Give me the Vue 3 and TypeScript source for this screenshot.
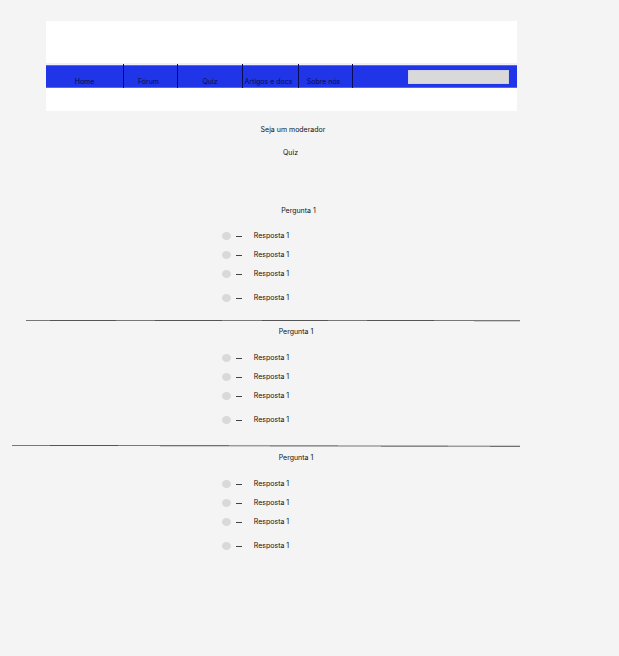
<script setup lang="ts">
import { ref } from 'vue'

interface NavItem {
  label: string
  href: string
  centered?: boolean
}

interface Segment {
  start: number
  end: number
  top: string
  bottom: string
}

interface Question {
  id: string
  title: string
  answers: string[]
}

const navItems: NavItem[] = [
  { label: 'Home', href: '#home', centered: true },
  { label: 'Fórum', href: '#forum' },
  { label: 'Quiz', href: '#quiz', centered: true },
  { label: 'Artigos e docs', href: '#artigos' },
  { label: 'Sobre nós', href: '#sobre' },
]

const answers = ['Resposta 1', 'Resposta 1', 'Resposta 1', 'Resposta 1']

const questions: Question[] = [
  { id: 'q1', title: 'Pergunta 1', answers },
  { id: 'q2', title: 'Pergunta 1', answers },
  { id: 'q3', title: 'Pergunta 1', answers },
]

const selected = ref<Record<string, number | undefined>>({})

// Hand-ruled dividers: tone of the upper and lower pixel row along each stretch.
const none = 'transparent'
const dividers: { width: number; segments: Segment[] }[] = [
  {
    width: 494,
    segments: [
      { start: 0, end: 24, top: '#777', bottom: none },
      { start: 24, end: 90, top: '#555', bottom: none },
      { start: 90, end: 129, top: '#777', bottom: none },
      { start: 129, end: 196, top: '#555', bottom: none },
      { start: 196, end: 236, top: '#777', bottom: none },
      { start: 236, end: 302, top: '#555', bottom: none },
      { start: 302, end: 341, top: '#777', bottom: none },
      { start: 341, end: 408, top: '#555', bottom: none },
      { start: 408, end: 448, top: '#777', bottom: none },
      { start: 448, end: 494, top: '#777', bottom: '#ccc' },
    ],
  },
  {
    width: 508,
    segments: [
      { start: 0, end: 38, top: '#777', bottom: none },
      { start: 38, end: 106, top: '#555', bottom: none },
      { start: 106, end: 148, top: '#777', bottom: none },
      { start: 148, end: 217, top: '#707070', bottom: '#ccc' },
      { start: 217, end: 258, top: '#999', bottom: '#ccc' },
      { start: 258, end: 326, top: '#909090', bottom: '#b4b4b4' },
      { start: 326, end: 369, top: '#b4b4b4', bottom: '#b4b4b4' },
      { start: 369, end: 436, top: '#b4b4b4', bottom: '#888' },
      { start: 436, end: 478, top: '#ccc', bottom: '#999' },
      { start: 478, end: 508, top: '#ccc', bottom: '#707070' },
    ],
  },
]
</script>

<template>
  <div class="page">
    <header class="header">
      <nav class="nav" aria-label="Principal">
        <a
          v-for="item in navItems"
          :key="item.label"
          class="nav-link"
          :class="{ centered: item.centered }"
          :href="item.href"
        >{{ item.label }}</a>
        <div class="search">
          <input class="search-input" type="search" aria-label="Buscar" />
        </div>
      </nav>
    </header>

    <main>
      <div class="intro">
        <a class="moderator" href="#moderador">Seja um moderador</a>
        <h1 class="title">Quiz</h1>
      </div>

      <template v-for="(question, index) in questions" :key="question.id">
        <svg
          v-if="index > 0"
          class="divider"
          :class="{ wide: index === 2 }"
          :viewBox="`0 0 ${dividers[index - 1].width} 2`"
          preserveAspectRatio="none"
          shape-rendering="crispEdges"
          aria-hidden="true"
        >
          <g v-for="segment in dividers[index - 1].segments" :key="segment.start">
            <rect :x="segment.start" y="0" :width="segment.end - segment.start" height="1" :fill="segment.top" />
            <rect :x="segment.start" y="1" :width="segment.end - segment.start" height="1" :fill="segment.bottom" />
          </g>
        </svg>
        <section class="question" role="radiogroup" :aria-labelledby="question.id">
          <h2 :id="question.id" class="question-title">{{ question.title }}</h2>
          <div class="answers">
            <label v-for="(answer, i) in question.answers" :key="i" class="answer">
              <input v-model="selected[question.id]" class="radio" type="radio" :name="question.id" :value="i" />
              <span class="dash"></span>
              <span>{{ answer }}</span>
            </label>
          </div>
        </section>
      </template>
    </main>
  </div>
</template>

<style>
body {
  background: #f4f4f4;
}
</style>

<style scoped>
.page {
  padding: 21px 0 100px;
  font-family: Inter, "Liberation Sans", sans-serif;
  font-size: 7px;
  line-height: 10px;
  color: #111;
}

.header {
  margin: 0 102px 0 46px;
  padding: 42px 0 23px;
  background: #fff;
}

.nav {
  display: grid;
  grid-template-columns: 78fr 54fr 65fr 56fr 54fr 164fr;
  height: 25px;
  box-sizing: border-box;
  border-top: 2px solid #f0f1f6;
  background: #2035e8;
  box-shadow: inset 0 1px #5766ee, inset 0 -1px #5766ee;
}

.nav-link {
  display: flex;
  align-items: flex-end;
  justify-content: center;
  margin-top: -1px;
  padding: 0 4px 1px 0;
  border-right: 1px solid #080d55;
  color: #080d45;
  text-decoration: none;
  white-space: nowrap;
}

.nav-link.centered {
  padding-right: 0;
}

.search {
  display: flex;
  align-items: center;
  justify-content: flex-end;
  padding-right: 8px;
}

.search-input {
  width: 101px;
  height: 14px;
  box-sizing: border-box;
  padding: 0 4px;
  border: 1px solid #cdcfe0;
  border-radius: 0;
  background: #d9d9d9;
  font: inherit;
  appearance: none;
}

.intro {
  display: flex;
  flex-direction: column;
  align-items: center;
  gap: 13px;
  margin: 14px 33px 48px 0;
}

.moderator {
  color: inherit;
  text-decoration: none;
}

.title,
.question-title {
  margin: 0;
  font-size: 7px;
  font-weight: 400;
}

.title {
  padding-right: 5px;
}

.question {
  display: flex;
  flex-direction: column;
  align-items: center;
  gap: 16px;
  padding-right: 27px;
}

.question:first-of-type {
  padding-right: 22px;
  gap: 15px;
}

.answers {
  display: flex;
  flex-direction: column;
  gap: 9px;
  margin-right: 81px;
}

.question:first-of-type .answers {
  margin-right: 86px;
}

.answer {
  display: flex;
  align-items: center;
}

.answer:last-child {
  margin-top: 5px;
}

.radio {
  width: 9px;
  height: 8px;
  margin: 0 5px 0 0;
  border-radius: 50%;
  background: #d9d9d9;
  appearance: none;
}

.radio:checked {
  background: #2035e8;
}

.dash {
  width: 6px;
  height: 1px;
  margin-right: 12px;
  background: #444;
}

.divider {
  display: block;
  width: calc(100% - 125px);
  height: 2px;
  margin: 17px 0 5px 26px;
}

.divider.wide {
  width: calc(100% - 111px);
  margin: 20px 0 6px 12px;
}
</style>
